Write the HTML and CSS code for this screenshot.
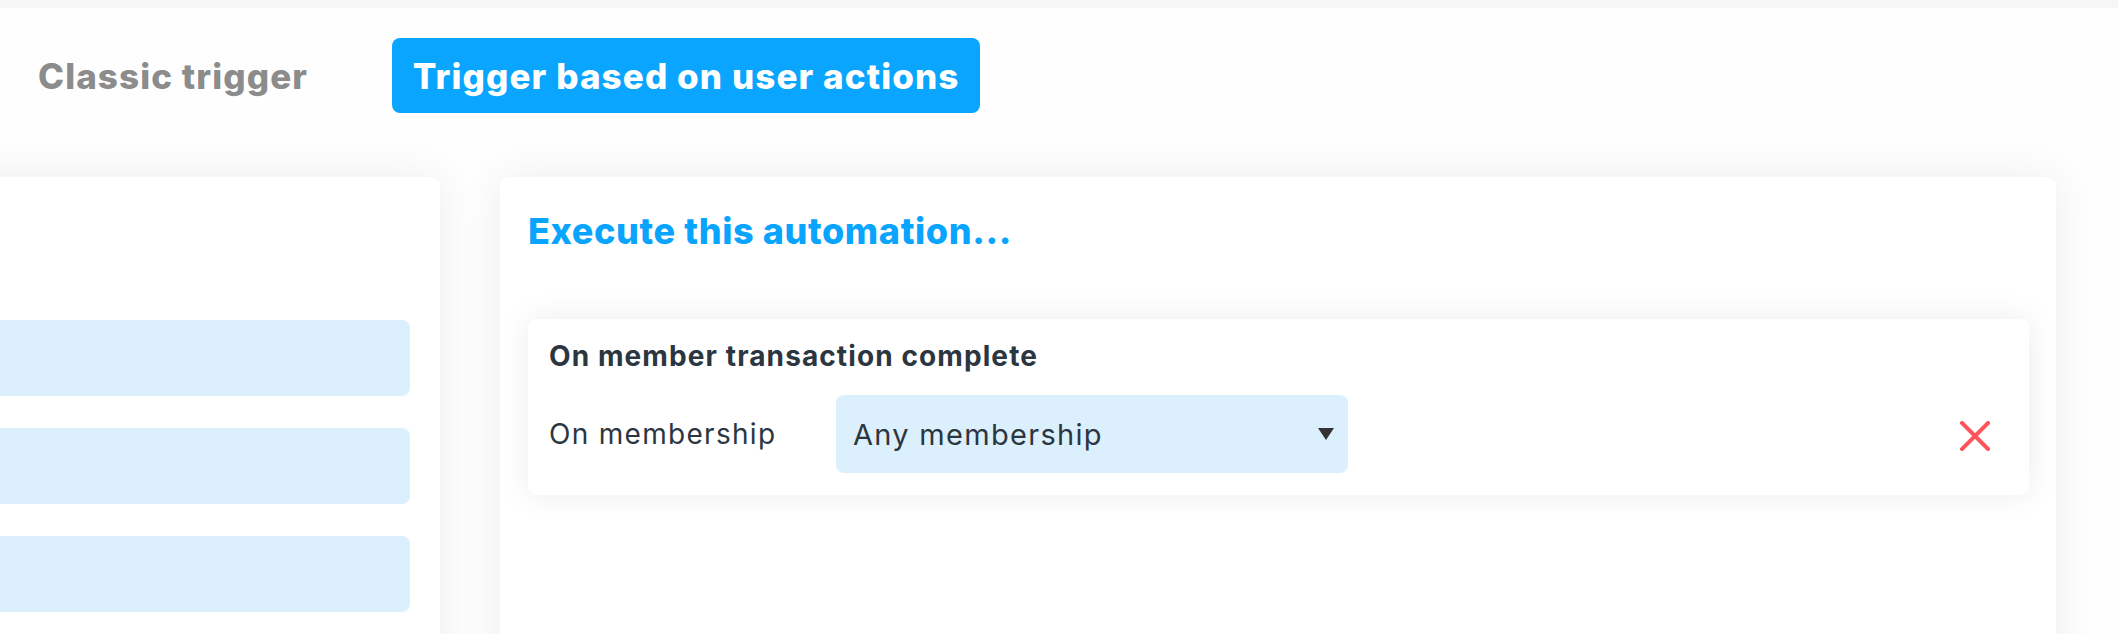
FILE: index.html
```html
<!DOCTYPE html>
<html lang="en">
<head>
<meta charset="utf-8">
<title>Automation trigger</title>
<link rel="stylesheet" href="styles.css">
</head>
<body>
<div class="topbar"></div>
<div class="tabs">
  <span class="tab">Classic trigger</span>
  <button class="tab tab-active">Trigger based on user actions</button>
</div>
<div class="board">
  <section class="card card-left">
    <div class="bar"></div>
    <div class="bar"></div>
    <div class="bar"></div>
  </section>
  <section class="card card-right">
    <h2 class="card-title">Execute this automation...</h2>
    <div class="trigger">
      <div class="trigger-body">
        <h3 class="trigger-title">On member transaction complete</h3>
        <div class="trigger-row">
          <span class="trigger-label">On membership</span>
          <div class="select">
            <span>Any membership</span>
            <svg class="caret" width="16" height="12" viewBox="0 0 16 12"><path d="M0 0H16L8 12Z" fill="#333"/></svg>
          </div>
        </div>
      </div>
      <svg class="remove" width="30" height="30" viewBox="0 0 30 30"><path d="M2 2L28 28M28 2L2 28" stroke="#ff545a" stroke-width="4" stroke-linecap="square"/></svg>
    </div>
  </section>
</div>
</body>
</html>
```
FILE: styles.css
```css
html, body {
  margin: 0;
  padding: 0;
  height: 634px;
  overflow: hidden;
  background: #fefefe;
  font-family: Inter, "Noto Sans", sans-serif;
}

.topbar {
  height: 8px;
  background: #f6f6f6;
}

.tabs {
  display: flex;
  align-items: center;
  margin-top: 30px;
  padding-left: 38px;
}

.tab {
  font-family: Inter, sans-serif;
  font-weight: 800;
  font-size: 35px;
  color: #8c8c8c;
  letter-spacing: 1.1px;
  white-space: nowrap;
}

.tab-active {
  margin-left: 84px;
  width: 588px;
  height: 75px;
  flex: none;
  border: none;
  border-radius: 8px;
  background: #0aa5ff;
  color: #ffffff;
  padding: 0 10px;
  text-align: center;
}

.board {
  display: flex;
  gap: 60px;
  margin-top: 64px;
  margin-left: -100px;
}

.card {
  background: #ffffff;
  border-radius: 9px;
  box-shadow: 0 0 45px rgba(0, 0, 0, 0.07);
  height: 520px;
  box-sizing: border-box;
}

.card-left {
  width: 540px;
  padding: 143px 30px 0 0;
  display: flex;
  flex-direction: column;
  gap: 32px;
}

.bar {
  height: 76px;
  background: #dbeffd;
  border-radius: 8px;
}

.card-right {
  width: 1556px;
  padding: 36px 27px 0 28px;
}

.card-title {
  margin: 0;
  font-size: 36px;
  line-height: 36px;
  font-weight: 800;
  color: #08a4fd;
  letter-spacing: 0.6px;
}

.trigger {
  margin-top: 70px;
  background: #ffffff;
  border-radius: 8px;
  box-shadow: 0 0 32px rgba(0, 0, 0, 0.08);
  display: flex;
  align-items: flex-end;
  justify-content: space-between;
  padding: 23px 39px 22px 21px;
}

.trigger-title {
  margin: 0;
  font-size: 28px;
  line-height: 28px;
  font-weight: 700;
  color: #2b3640;
  letter-spacing: 1.1px;
}

.trigger-row {
  display: flex;
  align-items: center;
  margin-top: 25px;
}

.trigger-label {
  width: 287px;
  font-size: 28px;
  color: #2b3640;
  letter-spacing: 1.3px;
}

.select {
  width: 512px;
  height: 78px;
  box-sizing: border-box;
  border-radius: 8px;
  background: #dbeffd;
  display: flex;
  align-items: center;
  justify-content: space-between;
  padding: 0 14px 0 17px;
  font-size: 29px;
  color: #2b3640;
  letter-spacing: 1.3px;
}

.caret {
  display: block;
}

.remove {
  display: block;
  margin-bottom: 22px;
}
```
